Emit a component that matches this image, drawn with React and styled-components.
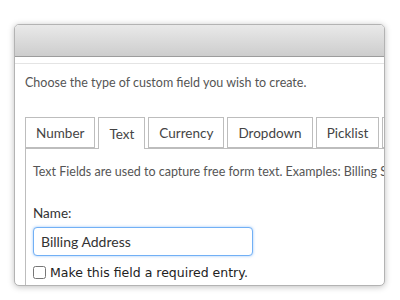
import React from "react";
import styled, { createGlobalStyle } from "styled-components";

const GlobalStyle = createGlobalStyle`
  html, body {
    margin: 0;
    padding: 0;
    background: #ffffff;
  }
`;

const tabs = ["Number", "Text", "Currency", "Dropdown", "Picklist", "Date"];

const App = () => {
  return (
    <Page>
      <GlobalStyle />
      <Window>
        <TitleBar />
        <SubBar />
        <Body>
          <Intro>Choose the type of custom field you wish to create.</Intro>
          <TabRow>
            {tabs.map((t) => (
              <Tab key={t} active={t === "Text"}>
                {t}
              </Tab>
            ))}
          </TabRow>
          <Panel>
            <Description>
              Text Fields are used to capture free form text. Examples: Billing
              Street, Shipping Address
            </Description>
            <Label>Name:</Label>
            <Input defaultValue="Billing Address" />
            <CheckRow>
              <Check type="checkbox" />
              <CheckLabel>Make this field a required entry.</CheckLabel>
            </CheckRow>
          </Panel>
        </Body>
      </Window>
    </Page>
  );
};

const Page = styled.div`
  padding: 24px 0 0 14px;
  width: 400px;
  height: 300px;
  box-sizing: border-box;
  overflow: hidden;
`;

const Window = styled.div`
  width: 371px;
  height: 262px;
  box-sizing: border-box;
  border: 1px solid #b3b3b3;
  border-radius: 5px;
  box-shadow: 0 1px 6px rgba(0, 0, 0, 0.25);
  overflow: hidden;
  background: #fff;
  display: flex;
  flex-direction: column;
`;

const TitleBar = styled.div`
  height: 31px;
  flex-shrink: 0;
  background: linear-gradient(#e9e9e9, #cdcdcd);
  border-bottom: 1px solid #9c9c9c;
`;

const SubBar = styled.div`
  height: 6px;
  flex-shrink: 0;
  border-bottom: 1px solid #e4e4e4;
`;

const Body = styled.div`
  padding: 10px 0 0 10px;
  font-family: Lato, "Open Sans", sans-serif;
  color: #555;
  flex: 1;
  min-height: 0;
`;

const Intro = styled.p`
  margin: 0;
  font-size: 12.5px;
  line-height: 18px;
  white-space: nowrap;
`;

const TabRow = styled.div`
  display: flex;
  gap: 3px;
  margin-top: 25px;
  align-items: flex-end;
`;

const Tab = styled.div`
  flex-shrink: 0;
  height: ${(p) => (p.active ? "32px" : "31px")};
  box-sizing: border-box;
  padding: 0 10px;
  border: 1px solid #bdbdbd;
  border-bottom: ${(p) => (p.active ? "none" : "1px solid #bdbdbd")};
  background: #fff;
  margin-bottom: ${(p) => (p.active ? "-1px" : "0")};
  position: relative;
  z-index: ${(p) => (p.active ? 1 : 0)};
  display: flex;
  align-items: center;
  font-size: 13.5px;
  color: #444;
`;

const Panel = styled.div`
  border-top: 1px solid #bdbdbd;
  border-left: 1px solid #bdbdbd;
  padding: 14px 0 0 7px;
  height: 200px;
`;

const Description = styled.p`
  margin: 0;
  font-size: 12.5px;
  line-height: 18px;
  white-space: nowrap;
`;

const Label = styled.div`
  margin-top: 23px;
  font-size: 13.5px;
  line-height: 18px;
  color: #333;
`;

const Input = styled.input`
  display: block;
  margin-top: 5px;
  width: 220px;
  height: 29px;
  box-sizing: border-box;
  border: 1px solid #72b0f5;
  border-radius: 4px;
  box-shadow: 0 0 3px rgba(90, 160, 245, 0.6);
  padding: 0 7px;
  font-family: Lato, "Open Sans", sans-serif;
  font-size: 14px;
  color: #333;
  outline: none;
`;

const CheckRow = styled.label`
  display: flex;
  align-items: center;
  gap: 4px;
  margin-top: 9px;
`;

const Check = styled.input`
  margin: 0;
  width: 13px;
  height: 13px;
`;

const CheckLabel = styled.span`
  font-family: "DejaVu Sans", sans-serif;
  font-size: 12.5px;
  color: #222;
`;

export default App;
